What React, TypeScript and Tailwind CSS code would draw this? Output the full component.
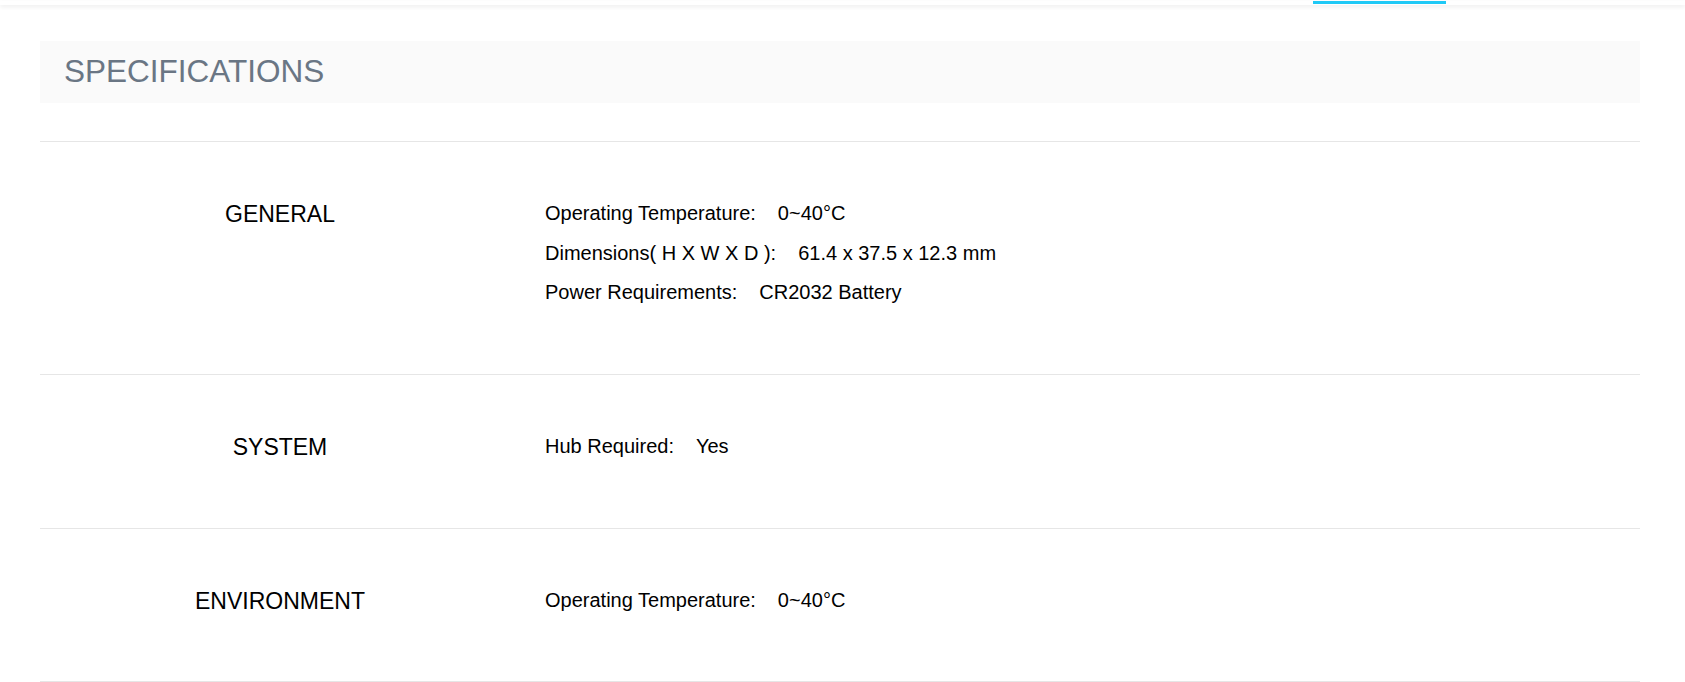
const specs = [
  {
    group: 'GENERAL',
    items: [
      { label: 'Operating Temperature:', value: '0~40°C' },
      { label: 'Dimensions( H X W X D ):', value: '61.4 x 37.5 x 12.3 mm' },
      { label: 'Power Requirements:', value: 'CR2032 Battery' },
    ],
  },
  {
    group: 'SYSTEM',
    items: [{ label: 'Hub Required:', value: 'Yes' }],
  },
  {
    group: 'ENVIRONMENT',
    items: [{ label: 'Operating Temperature:', value: '0~40°C' }],
  },
]

function SpecRow({ group, items }: { group: string; items: { label: string; value: string }[] }) {
  return (
    <div className="flex border-t border-[#e6e6e6] pt-[52px] pb-[61px] last:pb-[60px]">
      <div className="w-[480px] shrink-0 text-center text-[23px] leading-[40px] text-black">{group}</div>
      <div className="flex-1 pl-[25px]">
        {items.map((it) => (
          <div key={it.label} className="text-[20px] leading-[39.5px] text-black">
            <span>{it.label}</span>
            <span className="ml-[22px]">{it.value}</span>
          </div>
        ))}
      </div>
    </div>
  )
}

export default function App() {
  return (
    <div className="min-h-screen bg-white font-['Liberation_Sans',Arial,sans-serif]">
      {/* top nav edge */}
      <div className="h-[4px] bg-white shadow-[0_2px_4px_rgba(0,0,0,0.07)]">
        <div className="ml-[1313px] mt-px h-[3px] w-[133px] bg-[#1fc9f6]" />
      </div>

      <div className="px-[40px] pt-[36px] w-[1685px]">
        <div className="w-[1600px]">
          {/* header */}
          <div className="flex h-[62px] items-center bg-[#fafafa] px-[24px]">
            <h2 className="text-[31.5px] text-[#6a7684]">SPECIFICATIONS</h2>
          </div>

          <div className="mt-[38px] border-b border-[#e6e6e6]">
            {specs.map((s) => (
              <SpecRow key={s.group} group={s.group} items={s.items} />
            ))}
          </div>
        </div>
      </div>
    </div>
  )
}
